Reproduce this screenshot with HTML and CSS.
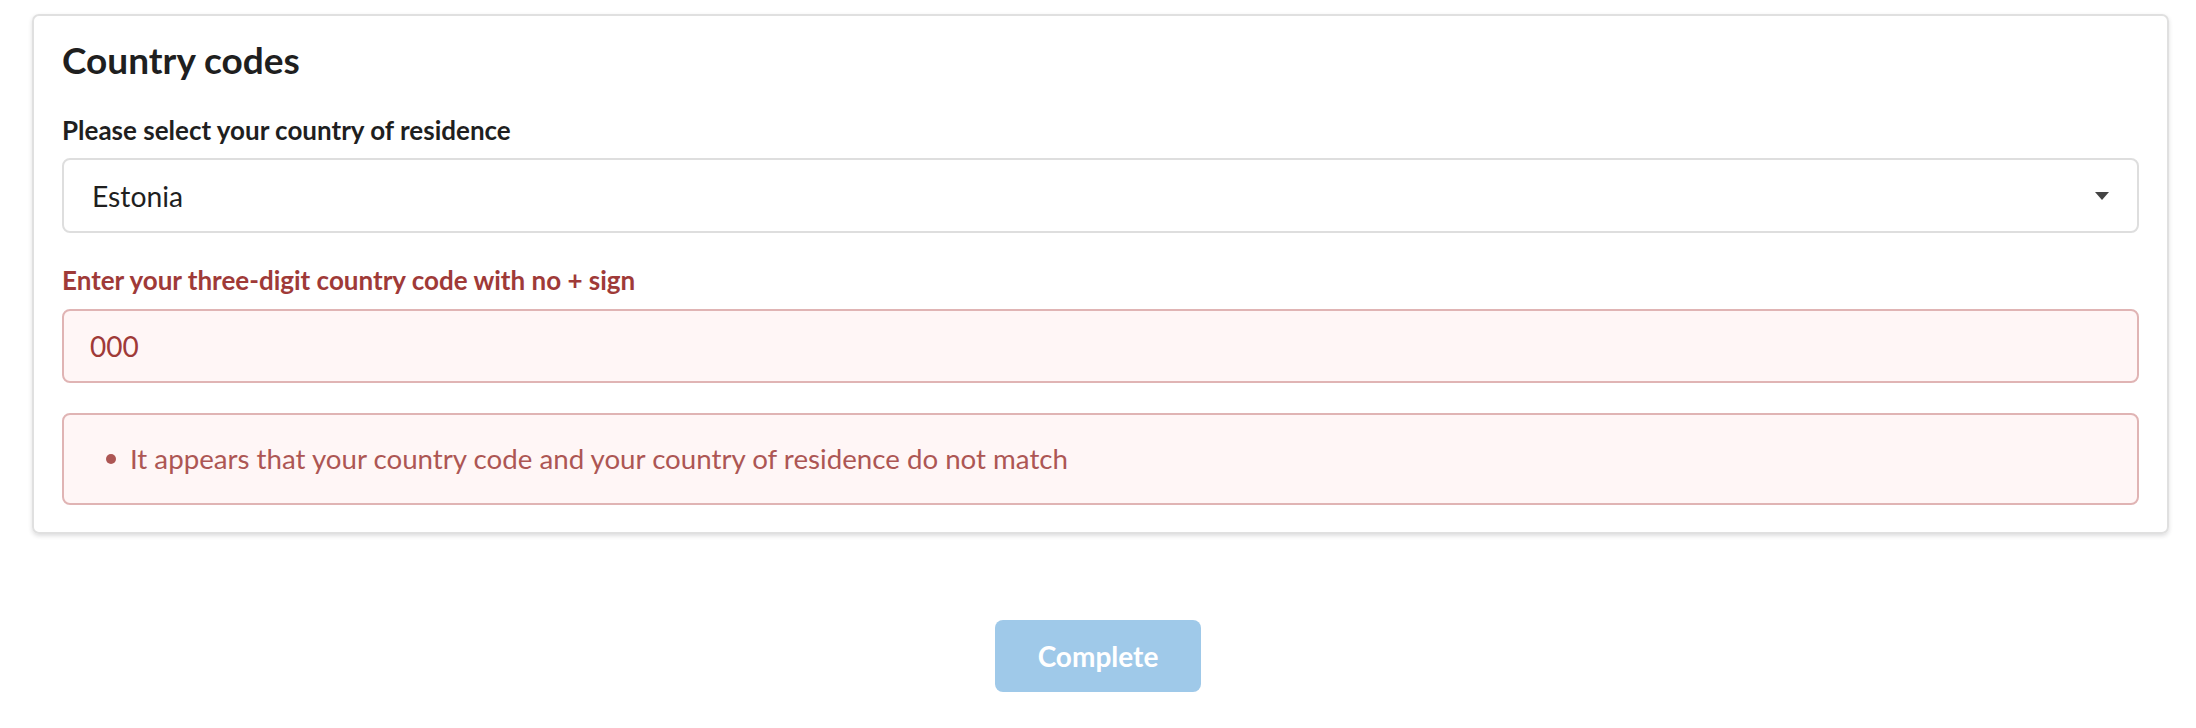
FILE: index.html
```html
<!DOCTYPE html>
<html lang="en">
<head>
<meta charset="utf-8">
<title>Country codes</title>
<link rel="stylesheet" href="styles.css">
</head>
<body>
<main class="page">
  <section class="card">
    <h3 class="card-title">Country codes</h3>
    <label class="field-label">Please select your country of residence</label>
    <div class="select">
      <span class="select-text">Estonia</span>
      <span class="select-arrow"></span>
    </div>
    <label class="field-label field-label--error">Enter your three-digit country code with no + sign</label>
    <div class="input input--error">000</div>
    <div class="message message--error">
      <ul class="message-list">
        <li class="message-item">It appears that your country code and your country of residence do not match</li>
      </ul>
    </div>
  </section>
  <div class="actions">
    <button class="btn btn--primary" disabled>Complete</button>
  </div>
</main>
</body>
</html>
```
FILE: styles.css
```css
html, body {
  margin: 0;
  padding: 0;
  background: #ffffff;
}

body {
  font-family: Lato, "Noto Sans", "Liberation Sans", sans-serif;
  color: #212121;
}

.page {
  display: flex;
  flex-direction: column;
  padding-top: 14px;
}

.card {
  box-sizing: border-box;
  margin-left: 32px;
  width: 2137px;
  border: 2px solid #e0e0e0;
  border-radius: 7px;
  box-shadow: 0 2px 4px rgba(34, 36, 38, 0.15);
  padding: 23px 28px 27px 28px;
  display: flex;
  flex-direction: column;
}

.card-title {
  margin: 0;
  font-size: 37px;
  line-height: 41px;
  font-weight: 700;
  color: #1f1f1f;
}

.field-label {
  display: block;
  margin-top: 35px;
  font-size: 26px;
  line-height: 30px;
  font-weight: 700;
  color: #1f1f1f;
}

.field-label--error {
  margin-top: 32px;
  color: #9f3a38;
}

.select {
  box-sizing: border-box;
  margin-top: 13px;
  height: 75px;
  border: 2px solid #dedede;
  border-radius: 8px;
  background: #ffffff;
  display: flex;
  align-items: center;
  justify-content: space-between;
  padding: 0 28px 0 28px;
}

.select-text {
  font-size: 28.3px;
  line-height: 32px;
  color: #1f1f1f;
}

.select-arrow {
  width: 0;
  height: 0;
  border-left: 7px solid transparent;
  border-right: 7px solid transparent;
  border-top: 8px solid #444444;
}

.input {
  box-sizing: border-box;
  margin-top: 14px;
  height: 74px;
  border: 2px solid #dedede;
  border-radius: 8px;
  display: flex;
  align-items: center;
  padding: 0 26px;
  font-size: 28px;
  line-height: 32px;
}

.input--error {
  background: #fff6f6;
  border-color: #e0b4b4;
  color: #9f3a38;
}

.message {
  box-sizing: border-box;
  margin-top: 30px;
  height: 92px;
  border-radius: 8px;
  display: flex;
  align-items: center;
}

.message--error {
  background: #fff6f6;
  border: 2px solid #e0b4b4;
  color: #ad5654;
}

.message-list {
  list-style: none;
  margin: 0;
  padding: 0 0 0 42px;
}

.message-item {
  display: flex;
  align-items: center;
  font-size: 27.7px;
  line-height: 32px;
}

.message-item::before {
  content: "";
  width: 10px;
  height: 10px;
  border-radius: 50%;
  background: #ad5654;
  margin-right: 14px;
  flex: none;
}

.actions {
  display: flex;
  justify-content: center;
  margin-top: 86px;
}

.btn {
  font-family: Lato, "Noto Sans", "Liberation Sans", sans-serif;
  border: none;
  border-radius: 8px;
  width: 206px;
  height: 72px;
  font-size: 28px;
  font-weight: 700;
  padding: 0;
}

.btn--primary {
  background: #9fc9e9;
  color: #ffffff;
}
```
